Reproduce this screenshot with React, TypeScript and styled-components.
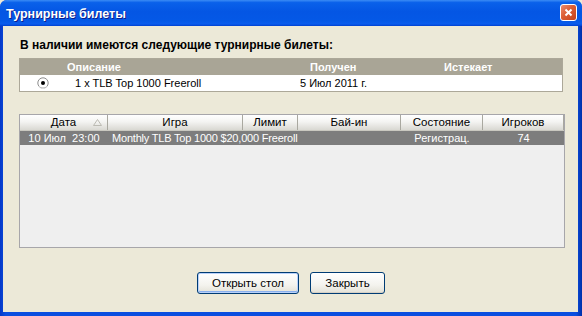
import styled, { createGlobalStyle } from "styled-components";

const GlobalStyle = createGlobalStyle`
  html, body {
    margin: 0;
    padding: 0;
    background: #ece9d8;
  }
  body {
    font-family: "Liberation Sans", Arial, sans-serif;
  }
`;

interface Column {
  title: string;
  width: number;
  sorted?: boolean;
}

const columns: Column[] = [
  { title: "Дата", width: 88, sorted: true },
  { title: "Игра", width: 135 },
  { title: "Лимит", width: 55 },
  { title: "Бай-ин", width: 103 },
  { title: "Состояние", width: 82 },
  { title: "Игроков", width: 81 },
];

const Window = styled.div`
  width: 582px;
  height: 316px;
  display: flex;
  flex-direction: column;
  background: #0842d8;
  border-radius: 7px 7px 0 0;
  overflow: hidden;
`;

const TitleBar = styled.div`
  height: 26px;
  flex-shrink: 0;
  display: flex;
  align-items: center;
  justify-content: space-between;
  padding: 0 4px 0 6px;
  background: linear-gradient(
    #3b8cf5 0%,
    #0a61ea 10%,
    #0456e4 45%,
    #0458e6 80%,
    #0a5ced 92%,
    #0040d0 100%
  );
`;

const TitleText = styled.span`
  color: #ffffff;
  font-weight: bold;
  font-size: 12.5px;
  text-shadow: 1px 1px 0 #0f1e8a;
  padding-top: 1px;
`;

const CloseButton = styled.div`
  width: 15px;
  height: 15px;
  border: 1px solid #ffffff;
  border-radius: 3px;
  background: linear-gradient(135deg, #ec8c6e 0%, #dc5e34 45%, #c4421c 100%);
  display: flex;
  align-items: center;
  justify-content: center;
  margin-top: -1px;
  margin-right: 1px;
`;

const Frame = styled.div`
  flex: 1;
  display: flex;
  padding: 0 4px 4px 3px;
  background: linear-gradient(90deg, #0638c8 0%, #0a4ee0 1%, #0a4ee0 99%, #002ea8 100%);
`;

const Client = styled.div`
  flex: 1;
  background: #ece9d8;
  display: flex;
  flex-direction: column;
  padding: 11px 0 0 16px;
`;

const Heading = styled.div`
  font-size: 12px;
  font-weight: bold;
  color: #000000;
  line-height: 16px;
  padding-left: 1px;
`;

const TicketTable = styled.div`
  margin-top: 5px;
  width: 544px;
  border: 1px solid #aca899;
  background: #ffffff;
  box-sizing: border-box;
`;

const TicketRow = styled.div<{ $header?: boolean }>`
  height: 16px;
  display: grid;
  grid-template-columns: 47px 233px 134px 1fr;
  align-items: center;
  background: ${(p) => (p.$header ? "#a9a596" : "#ffffff")};
  color: ${(p) => (p.$header ? "#ffffff" : "#000000")};
  font-weight: ${(p) => (p.$header ? "bold" : "normal")};
  font-size: 11px;
`;

const Cell = styled.span<{ $pad?: number }>`
  padding-left: ${(p) => p.$pad ?? 0}px;
  white-space: nowrap;
  display: flex;
  align-items: center;
`;

const GameTable = styled.div`
  margin-top: 22px;
  width: 546px;
  height: 134px;
  box-sizing: border-box;
  border: 1px solid #a7a6aa;
  background: #efefef;
  display: flex;
  flex-direction: column;
`;

const HeaderRow = styled.div`
  display: flex;
  height: 15px;
  background: linear-gradient(#ffffff 0%, #f4f4f2 45%, #d9d8d2 100%);
  border-bottom: 1px solid #c9c8c0;
`;

const HeaderCell = styled.div<{ $w: number }>`
  width: ${(p) => p.$w}px;
  flex-shrink: 0;
  box-sizing: border-box;
  border-right: 1px solid #a9a8a0;
  position: relative;
  font-size: 11.5px;
  color: #000000;
  text-align: center;
  line-height: 15px;
`;

const SortArrow = styled.svg`
  position: absolute;
  right: 5px;
  top: 4px;
`;

const DataRow = styled.div`
  display: flex;
  height: 14px;
  background: #7d7d7d;
  color: #ffffff;
  font-size: 11px;
  line-height: 14px;
`;

const DataCell = styled.div<{ $w: number; $align?: string }>`
  width: ${(p) => p.$w}px;
  flex-shrink: 0;
  box-sizing: border-box;
  text-align: ${(p) => p.$align ?? "center"};
  white-space: nowrap;
  overflow: visible;
  padding-left: ${(p) => (p.$align === "left" ? "4px" : "0")};
  letter-spacing: ${(p) => (p.$align === "left" ? "-0.2px" : "0")};
`;

const ButtonRow = styled.div`
  display: flex;
  gap: 11px;
  margin-top: 24px;
  padding-left: 178px;
`;

const Button = styled.button<{ $default?: boolean; $w: number }>`
  width: ${(p) => p.$w}px;
  height: 22px;
  border: 1px solid #003c74;
  border-radius: 3px;
  background: linear-gradient(#ffffff 0%, #f4f3ee 60%, #e3e1d6 100%);
  font-family: "Liberation Sans", Arial, sans-serif;
  font-size: 11.5px;
  color: #000000;
  padding: 0;
  box-shadow: ${(p) =>
    p.$default
      ? "inset 0 0 0 1px #b9d1fa, inset 0 -1px 0 1px #8ab0ee"
      : "inset 0 -1px 0 0 #d6d0c5"};
`;

const Radio = () => (
  <svg width="12" height="12" viewBox="0 0 12 12">
    <circle cx="6" cy="6" r="5.2" fill="#ffffff" stroke="#8d8d8d" strokeWidth="1" />
    <path d="M2 9.5 A5 5 0 0 0 10 9.5" stroke="#e0e0e0" strokeWidth="1" fill="none" />
    <circle cx="6" cy="6" r="2" fill="#000000" />
  </svg>
);

const App = () => {
  return (
    <>
      <GlobalStyle />
      <Window>
        <TitleBar>
          <TitleText>Турнирные билеты</TitleText>
          <CloseButton>
            <svg width="9" height="9" viewBox="0 0 9 9">
              <path d="M1.5 1.5 L7.5 7.5 M7.5 1.5 L1.5 7.5" stroke="#ffffff" strokeWidth="2" />
            </svg>
          </CloseButton>
        </TitleBar>
        <Frame>
          <Client>
            <Heading>В наличии имеются следующие турнирные билеты:</Heading>

            {/* tickets */}
            <TicketTable>
              <TicketRow $header>
                <Cell />
                <Cell>Описание</Cell>
                <Cell $pad={10}>Получен</Cell>
                <Cell $pad={10}>Истекает</Cell>
              </TicketRow>
              <TicketRow>
                <Cell $pad={17}>
                  <Radio />
                </Cell>
                <Cell $pad={8}>1 x TLB Top 1000 Freeroll</Cell>
                <Cell $pad={0}>5 Июл 2011 г.</Cell>
                <Cell />
              </TicketRow>
            </TicketTable>

            {/* games */}
            <GameTable>
              <HeaderRow>
                {columns.map((c) => (
                  <HeaderCell key={c.title} $w={c.width}>
                    {c.title}
                    {c.sorted && (
                      <SortArrow width="9" height="7" viewBox="0 0 9 7">
                        <path d="M4.5 0.5 L8.5 6.5 L0.5 6.5 Z" fill="none" stroke="#bcbbb3" />
                      </SortArrow>
                    )}
                  </HeaderCell>
                ))}
              </HeaderRow>
              <DataRow>
                <DataCell $w={88}>10 Июл&nbsp;&nbsp;23:00</DataCell>
                <DataCell $w={135} $align="left">
                  Monthly TLB Top 1000 $20,000 Freeroll
                </DataCell>
                <DataCell $w={55} />
                <DataCell $w={103} />
                <DataCell $w={82}>Регистрац.</DataCell>
                <DataCell $w={81}>74</DataCell>
              </DataRow>
            </GameTable>

            <ButtonRow>
              <Button $default $w={102}>
                Открыть стол
              </Button>
              <Button $w={75}>Закрыть</Button>
            </ButtonRow>
          </Client>
        </Frame>
      </Window>
    </>
  );
};

export default App;
